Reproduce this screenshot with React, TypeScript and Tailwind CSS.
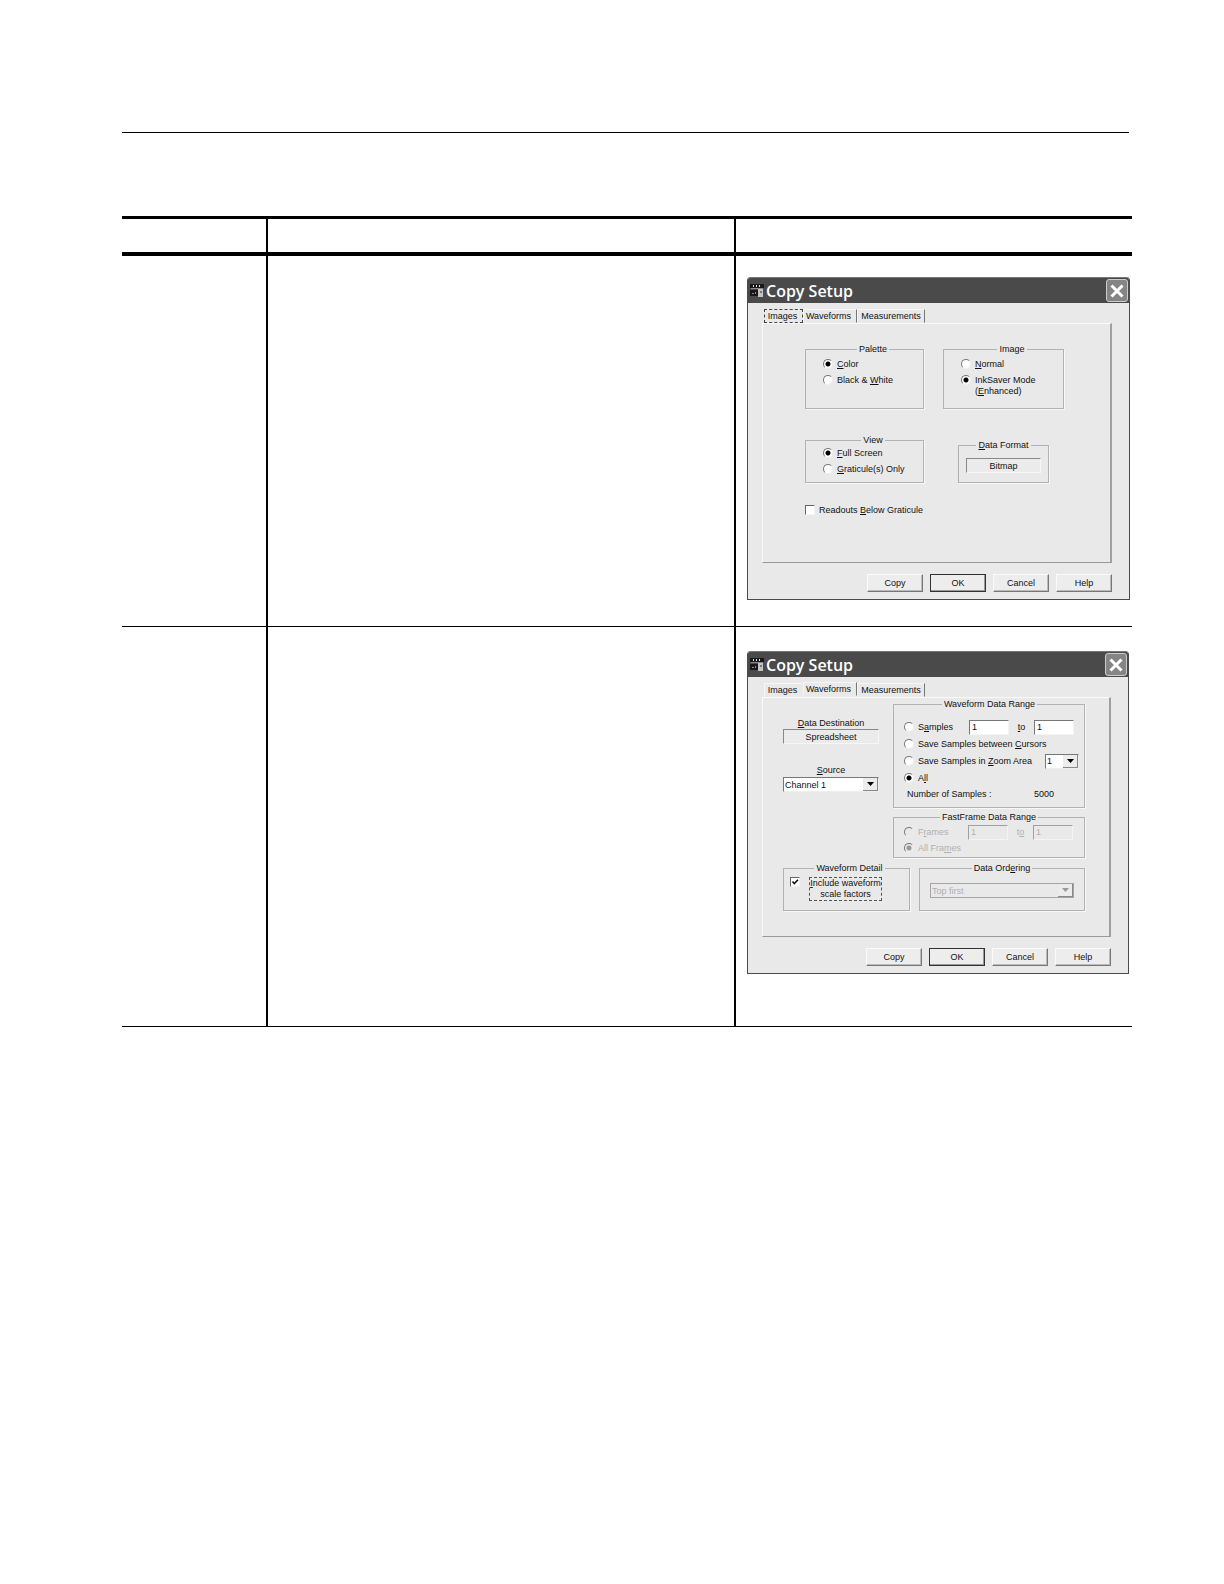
import { useId, type ReactNode } from 'react';
import clsx from 'clsx';

const TABS = ['Images', 'Waveforms', 'Measurements'];

/** Text with its access key underlined: "&Color" underlines the C. */
function Key({ children }: { children: string }) {
  const at = children.search(/&\S/);
  if (at < 0) return <>{children}</>;
  return (
    <span>
      {children.slice(0, at)}
      <span className="underline decoration-1 underline-offset-1">{children[at + 1]}</span>
      {children.slice(at + 2)}
    </span>
  );
}

function Group({ title, className, children }: { title: string; className?: string; children: ReactNode }) {
  return (
    <fieldset className={clsx('border border-[#b2b2b2] shadow-[1px_1px_0_#f8f8f8]', className)}>
      <legend className="mx-auto px-0.5 leading-3">
        <Key>{title}</Key>
      </legend>
      {children}
    </fieldset>
  );
}

function Radio({
  name,
  checked,
  disabled,
  children,
}: {
  name: string;
  checked?: boolean;
  disabled?: boolean;
  children: ReactNode;
}) {
  return (
    <label className={clsx('flex items-start gap-1 leading-[11px]', disabled && 'text-[#b0b0b0]')}>
      <input
        type="radio"
        name={name}
        defaultChecked={checked}
        disabled={disabled}
        className="size-[10px] shrink-0 appearance-none rounded-full border border-t-[#777] border-r-[#eee] border-b-[#eee] border-l-[#777] bg-white checked:bg-[radial-gradient(circle,#000_2px,#fff_3px)] disabled:bg-[#e9e9e9] disabled:checked:bg-[radial-gradient(circle,#999_2px,#e9e9e9_3px)]"
      />
      <span>{children}</span>
    </label>
  );
}

function Checkbox({
  checked,
  className,
  children,
}: {
  checked?: boolean;
  className?: string;
  children: ReactNode;
}) {
  return (
    <label className={clsx('flex items-start leading-[11px]', className)}>
      <span className="relative size-[10px] shrink-0">
        <input
          type="checkbox"
          defaultChecked={checked}
          className="peer block size-[10px] appearance-none border border-t-[#666] border-r-[#f4f4f4] border-b-[#f4f4f4] border-l-[#666] bg-white"
        />
        <svg
          viewBox="0 0 10 10"
          className="pointer-events-none absolute inset-0 hidden size-[10px] peer-checked:block"
          fill="none"
          stroke="#111"
          strokeWidth="1.6"
        >
          <path d="M2.5 4.5 4.3 6.5 8 2.8" />
        </svg>
      </span>
      {children}
    </label>
  );
}

function Select({
  label,
  id,
  value,
  disabled,
  className,
}: {
  label?: string;
  id?: string;
  value: string;
  disabled?: boolean;
  className?: string;
}) {
  return (
    <span className={clsx('relative block', className)}>
      <select
        id={id}
        aria-label={label}
        disabled={disabled}
        className="block h-[15px] w-full appearance-none border border-t-[#777] border-r-[#eee] border-b-[#eee] border-l-[#777] bg-white pl-px leading-3 disabled:border-[#a5a5a5] disabled:bg-[#e9e9e9] disabled:text-[#b0b0b0] disabled:opacity-100"
      >
        <option>{value}</option>
      </select>
      <span className="pointer-events-none absolute inset-y-px right-px flex w-[15px] items-center justify-center border-r border-b border-[#888] bg-[#ececec]">
        <svg viewBox="0 0 7 4" className="h-1 w-[7px]" fill={disabled ? '#999' : '#000'}>
          <path d="M0 0h7L3.5 4z" />
        </svg>
      </span>
    </span>
  );
}

function NumberBox({ label, disabled }: { label: string; disabled?: boolean }) {
  return (
    <input
      type="text"
      aria-label={label}
      defaultValue="1"
      disabled={disabled}
      className="h-[15px] w-10 border border-t-[#777] border-r-[#f4f4f4] border-b-[#f4f4f4] border-l-[#777] bg-white pl-0.5 leading-3 disabled:border-t-[#a0a0a0] disabled:border-l-[#a0a0a0] disabled:bg-[#e9e9e9] disabled:text-[#b0b0b0]"
    />
  );
}

function PushField({ className, children }: { className?: string; children: ReactNode }) {
  return (
    <button
      type="button"
      className={clsx(
        'block h-[15px] border border-t-[#888] border-r-[#f6f6f6] border-b-[#f6f6f6] border-l-[#888] bg-[#ebebeb] text-center leading-3',
        className,
      )}
    >
      {children}
    </button>
  );
}

function ScopeIcon() {
  return (
    <svg viewBox="0 0 14 14" className="size-[14px]">
      <path fill="#181818" d="M0 0h14v4H0zM0 6h8v6H0z" />
      <path fill="#ddd" d="M3 1h1v2H3zM6 1h1v2H6zM9 1h1v2H9z" />
      <path fill="#8a8a8a" d="M1 4h12v1H1zM2 9h2v1H2zM5 8h1v2H5z" />
      <path fill="#c4c4c4" d="M8 5h5v8H8z" />
      <path fill="#777" d="M10 7h2v2h-2z" />
    </svg>
  );
}

function Dialog({ active, focused, children }: { active: string; focused?: boolean; children: ReactNode }) {
  return (
    <section
      aria-label="Copy Setup"
      className="rounded-t-[4px] border border-t-0 border-[#4a4a4a] bg-[#e9e9e9] font-['Liberation_Sans',sans-serif] text-[9px] text-[#111]"
    >
      <header className="flex h-[26px] items-center gap-0.5 rounded-t-[3px] border-t border-[#777] bg-[#4a4a4a] pr-px pl-[2px]">
        <ScopeIcon />
        <h2 className="flex-1 font-['Open_Sans',sans-serif] text-base leading-6 font-semibold text-white">
          Copy Setup
        </h2>
        <button
          type="button"
          aria-label="Close"
          className="flex h-[23px] w-[22px] items-center justify-center rounded-[3px] border border-[#ccc] bg-[#858585]"
        >
          <svg viewBox="0 0 14 14" className="size-[14px]" stroke="#fff" strokeWidth="3">
            <path d="M1.5 1.5l11 11M12.5 1.5l-11 11" />
          </svg>
        </button>
      </header>

      <div role="tablist" className="mt-[5px] ml-4 flex h-[15px] items-end">
        {TABS.map((tab, i) => (
          <button
            key={tab}
            type="button"
            role="tab"
            aria-selected={tab === active}
            className={clsx(
              'h-[14px] border leading-3',
              i === 0 && 'w-[39px] pr-0.5',
              i === 1 && 'w-[54px] pr-[3px]',
              i === 2 && 'w-[68px]',
              tab === active && focused
                ? 'border-dashed border-[#444]'
                : 'border-t-[#f6f6f6] border-b-transparent border-l-[#f6f6f6]',
              !(tab === active && focused) && (i === 0 ? 'border-r-transparent' : 'border-r-[#777]'),
              tab === active && !focused && 'mb-px',
            )}
          >
            {tab}
          </button>
        ))}
      </div>

      <div
        role="tabpanel"
        className="mr-[17px] ml-[14px] border border-t-[#fafafa] border-r-2 border-r-[#a0a0a0] border-b-[#999] border-l-[#fafafa]"
      >
        {children}
      </div>

      <footer className="mt-[11px] mr-[17px] flex justify-end gap-[7px] pb-[7px]">
        {['Copy', 'OK', 'Cancel', 'Help'].map((name) => (
          <button
            key={name}
            type="button"
            className={clsx(
              'h-[18px] w-14 border bg-[#ededed] leading-4',
              name === 'OK'
                ? 'border-[#333] shadow-[inset_-1px_-1px_0_#999]'
                : 'border-t-[#fafafa] border-r-[#777] border-b-[#777] border-l-[#fafafa] shadow-[inset_-1px_-1px_0_#bbb]',
            )}
          >
            {name}
          </button>
        ))}
      </footer>
    </section>
  );
}

function ImagesTab() {
  return (
    <div className="pt-[19px] pr-[46px] pb-[46px] pl-[42px]">
      <div className="flex justify-between">
        <Group title="Palette" className="h-[66px] w-[119px] pl-[17px]">
          <div className="flex flex-col gap-[5px] pt-1">
            <Radio name="palette" checked>
              <Key>&Color</Key>
            </Radio>
            <Radio name="palette">
              Black &amp; <Key>&White</Key>
            </Radio>
          </div>
        </Group>
        <Group title="Image" className="h-[66px] w-[121px] pl-[17px]">
          <div className="flex flex-col gap-[5px] pt-1">
            <Radio name="image">
              <Key>&Normal</Key>
            </Radio>
            <Radio name="image" checked>
              InkSaver Mode
              <br />
              <Key>(&Enhanced)</Key>
            </Radio>
          </div>
        </Group>
      </div>

      <div className="mt-[25px] flex items-end justify-between">
        <Group title="View" className="h-[49px] w-[119px] pl-[17px]">
          <div className="flex flex-col gap-[5px] pt-0.5">
            <Radio name="view" checked>
              <Key>&Full Screen</Key>
            </Radio>
            <Radio name="view">
              <Key>&Graticule(s) Only</Key>
            </Radio>
          </div>
        </Group>
        <Group title="&Data Format" className="mr-[15px] h-11 w-[91px] px-[7px]">
          <PushField className="mt-[7px] w-full">Bitmap</PushField>
        </Group>
      </div>

      <Checkbox className="mt-[22px] gap-1">
        <Key>Readouts &Below Graticule</Key>
      </Checkbox>
    </div>
  );
}

function WaveformsTab() {
  const sourceId = useId();
  return (
    <div className="pr-6 pb-[25px] pl-5">
      <div className="flex justify-between">
        <div className="w-24 pt-[19px] text-center">
          <p className="leading-3">
            <Key>&Data Destination</Key>
          </p>
          <PushField className="w-full">Spreadsheet</PushField>
          <label htmlFor={sourceId} className="mt-5 block leading-[13px]">
            <Key>&Source</Key>
          </label>
          <Select id={sourceId} value="Channel 1" />
        </div>

        <div className="w-[192px]">
          <Group title="Waveform Data Range" className="pr-[9px] pb-1 pl-[10px]">
            <div className="flex flex-col gap-px pt-[9px]">
              <div className="flex h-4 items-center">
                <div className="w-[65px]">
                  <Radio name="range">
                    <Key>S&amples</Key>
                  </Radio>
                </div>
                <NumberBox label="First sample" />
                <span className="w-[25px] pt-0.5 text-center">
                  <Key>&to</Key>
                </span>
                <NumberBox label="Last sample" />
              </div>
              <div className="flex h-4 items-center">
                <Radio name="range">
                  <Key>Save Samples between &Cursors</Key>
                </Radio>
              </div>
              <div className="flex h-4 items-center justify-between">
                <Radio name="range">
                  <Key>Save Samples in &Zoom Area</Key>
                </Radio>
                <Select label="Zoom area" value="1" className="-mr-1 w-[34px]" />
              </div>
              <div className="flex h-4 items-center">
                <Radio name="range" checked>
                  <Key>A&ll</Key>
                </Radio>
              </div>
              <div className="flex h-4 items-center justify-between pr-[21px] pl-[3px]">
                <span>Number of Samples :</span>
                <span>5000</span>
              </div>
            </div>
          </Group>

          <Group title="FastFrame Data Range" className="mt-[3px] pt-px pr-[10px] pb-px pl-[10px]">
            <div className="flex h-4 items-center">
              <div className="w-[64px]">
                <Radio name="frames" disabled>
                  <Key>F&rames</Key>
                </Radio>
              </div>
              <NumberBox label="First frame" disabled />
              <span className="w-[25px] pt-0.5 text-center text-[#b0b0b0]">
                <Key>t&o</Key>
              </span>
              <NumberBox label="Last frame" disabled />
            </div>
            <div className="flex h-4 items-center">
              <Radio name="frames" checked disabled>
                <Key>All Fra&mes</Key>
              </Radio>
            </div>
          </Group>
        </div>
      </div>

      <div className="mt-1 flex justify-between">
        <Group title="Waveform Detail" className="h-[49px] w-[127px] pl-[6px]">
          <Checkbox checked className="gap-[9px] pt-[3px]">
            <span className="w-[73px] border border-dashed border-[#555] text-center whitespace-nowrap">
              <Key>&Include waveform</Key>
              <br />
              scale factors
            </span>
          </Checkbox>
        </Group>
        <Group title="Data Ord&ering" className="h-[49px] w-[166px] px-[10px]">
          <Select label="Data Ordering" value="Top first" disabled className="mt-[9px]" />
        </Group>
      </div>
    </div>
  );
}

export default function App() {
  return (
    <main className="min-h-screen bg-white pt-[132px] pr-[92px] pb-20 pl-[122px]">
      <hr className="mr-[3px] border-t border-black" />

      <table className="mt-[83px] w-full table-fixed border-separate border-spacing-0 border-t-[3px] border-black">
        <colgroup>
          <col className="w-36" />
          <col />
          <col className="w-[398px]" />
        </colgroup>
        <thead>
          <tr className="h-[37px]">
            <th className="border-b-4 border-black" />
            <th className="border-b-4 border-l-2 border-black" />
            <th className="border-b-4 border-l-2 border-black" />
          </tr>
        </thead>
        <tbody>
          <tr className="h-[371px] align-top">
            <td className="border-b border-black" />
            <td className="border-b border-l-2 border-black" />
            <td className="border-b border-l-2 border-black pt-[21px] pr-[2px] pl-[11px]">
              <Dialog active="Images" focused>
                <ImagesTab />
              </Dialog>
            </td>
          </tr>
          <tr className="h-[400px] align-top">
            <td className="border-b border-black" />
            <td className="border-b border-l-2 border-black" />
            <td className="border-b border-l-2 border-black pt-6 pr-[3px] pl-[11px]">
              <Dialog active="Waveforms">
                <WaveformsTab />
              </Dialog>
            </td>
          </tr>
        </tbody>
      </table>
    </main>
  );
}
